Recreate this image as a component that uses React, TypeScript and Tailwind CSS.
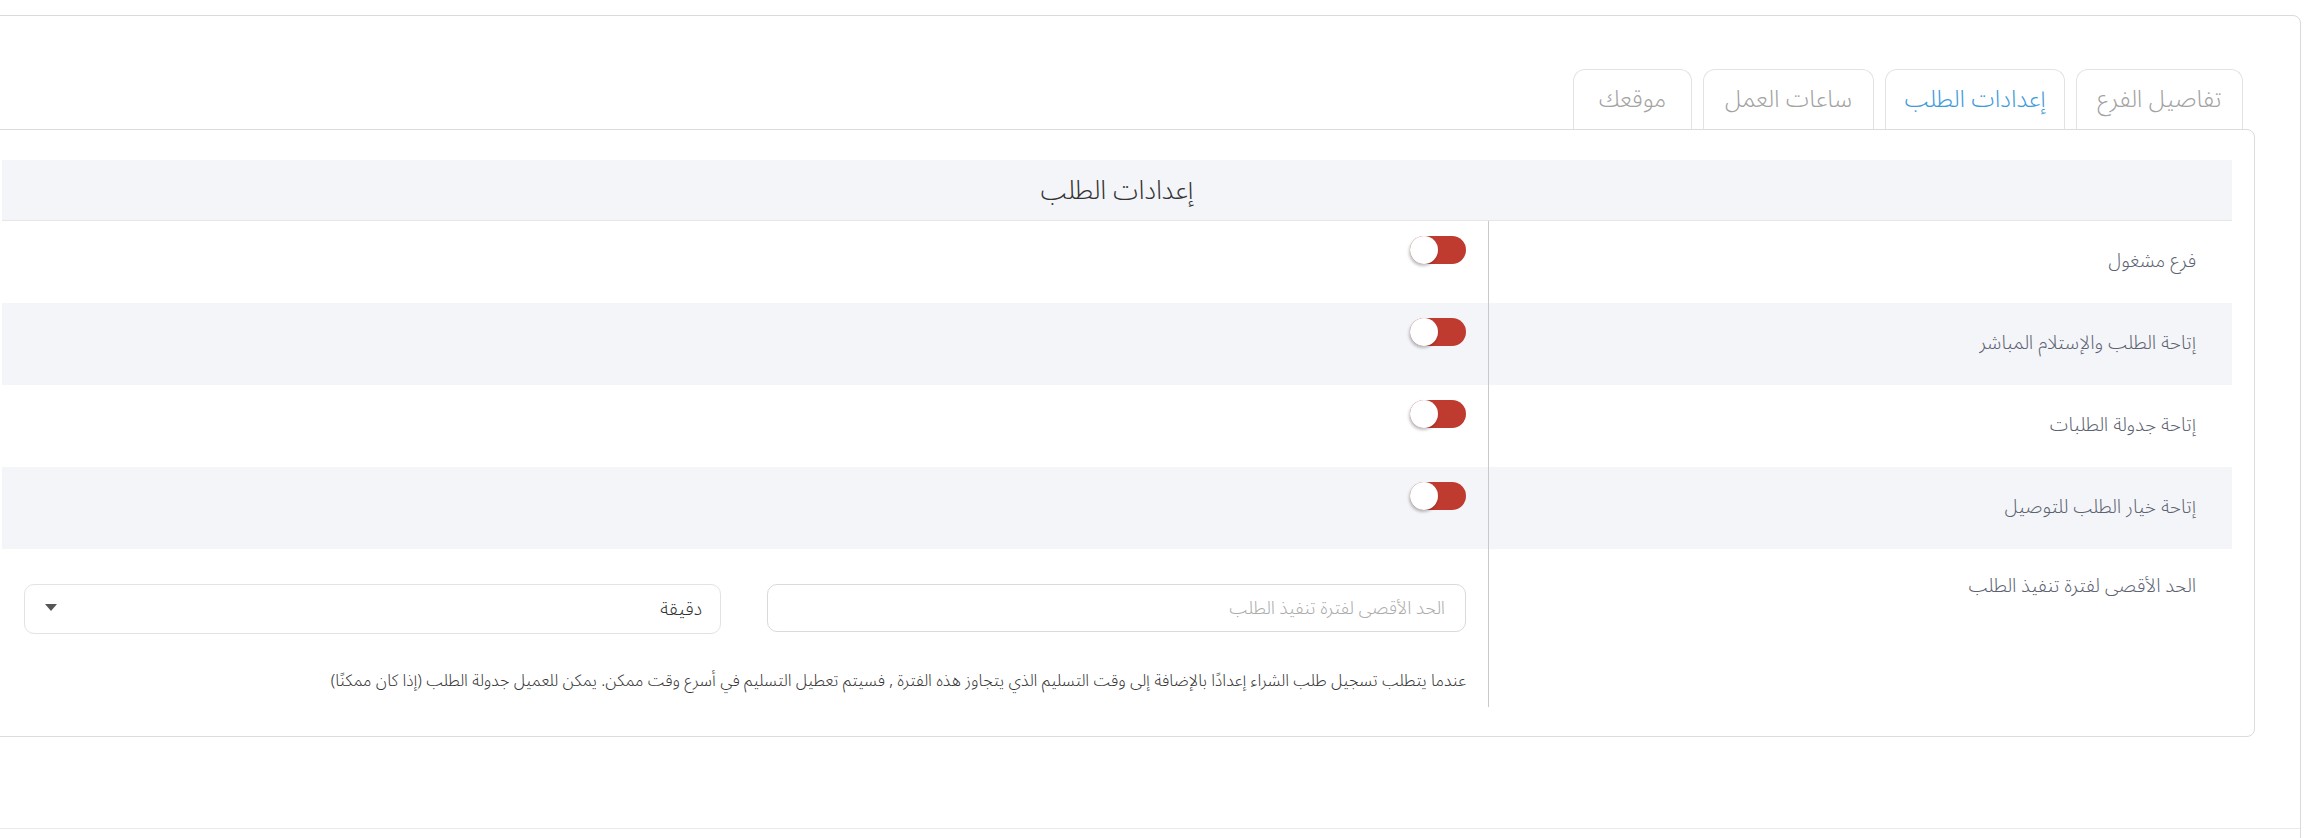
import React from 'react';

const font = { fontFamily: '"Noto Sans Arabic", "DejaVu Sans", sans-serif' };

type Tab = { label: string; width: string; active?: boolean };

const tabs: Tab[] = [
  { label: 'تفاصيل الفرع', width: 'w-[167px]' },
  { label: 'إعدادات الطلب', width: 'w-[180px]', active: true },
  { label: 'ساعات العمل', width: 'w-[171px]' },
  { label: 'موقعك', width: 'w-[119px]' },
];

const toggleRows = [
  'فرع مشغول',
  'إتاحة الطلب والإستلام المباشر',
  'إتاحة جدولة الطلبات',
  'إتاحة خيار الطلب للتوصيل',
];

const Toggle: React.FC = () => (
  <span className="relative inline-block w-[56px] h-[28px] rounded-full bg-[#bf3a2f]">
    <span className="absolute left-0 top-0 w-[28px] h-[28px] rounded-full bg-white shadow-[-1px_2px_3px_rgba(0,0,0,0.25)]" />
  </span>
);

const SettingRow: React.FC<{ label: string; gray: boolean; children: React.ReactNode }> = ({
  label,
  gray,
  children,
}) => (
  <div className={`flex ${gray ? 'bg-[#f4f5f9]' : 'bg-white'}`}>
    <div className="w-[744px] shrink-0 border-l border-[#c9c9cc] pr-[36px] pt-[27px] pb-[29px] text-[19px] leading-[26px] text-[#5b6270]">
      {label}
    </div>
    <div className="flex-1 px-[22px] pt-[15px]">{children}</div>
  </div>
);

export default function App() {
  return (
    <div dir="rtl" className="w-[2316px] h-[838px] overflow-hidden bg-white font-light" style={font}>
      <div className="w-[2368px] h-[900px] mt-[15px] mr-[15px] border border-[#dadada] rounded-[8px] pt-[53px] px-[45px]">
        {/* tabs */}
        <div className="flex gap-[11px] mr-[12px]">
          {tabs.map((t) => (
            <div
              key={t.label}
              className={`${t.width} h-[60px] flex items-center justify-center border border-b-0 border-[#e3e3e6] rounded-t-[12px] text-[24px] ${
                t.active ? 'text-[#3d9bdc]' : 'text-[#a2a2a2]'
              }`}
            >
              {t.label}
            </div>
          ))}
        </div>

        {/* panel */}
        <div className="border border-[#dcdcdc] rounded-[8px] px-[22px] pt-[30px] pb-[29px]">
          <div className="h-[61px] flex items-center justify-center bg-[#f4f5f9] border-b border-[#e6e6ea] text-[26px] text-[#333]">
            إعدادات الطلب
          </div>

          {toggleRows.map((label, i) => (
            <SettingRow key={label} label={label} gray={i % 2 === 1}>
              <Toggle />
            </SettingRow>
          ))}

          <div className="flex bg-white">
            <div className="w-[744px] shrink-0 border-l border-[#c9c9cc] pr-[36px] pt-[24px] text-[19px] leading-[26px] text-[#5b6270]">
              الحد الأقصى لفترة تنفيذ الطلب
            </div>
            <div className="flex-1 px-[22px] pt-[35px] pb-[14px]">
              <div className="flex gap-[46px]">
                <input
                  className="flex-1 h-[48px] border border-[#dadada] rounded-[10px] px-[20px] text-[18px] font-light text-[#333] placeholder:text-[#ababab] outline-none"
                  placeholder="الحد الأقصى لفترة تنفيذ الطلب"
                  style={font}
                />
                <div className="flex-1 h-[50px] border border-[#e2e2e8] rounded-[10px] pr-[18px] pl-[20px] flex items-center justify-between text-[19px] text-[#333]">
                  <span>دقيقة</span>
                  <svg width="12" height="8" viewBox="0 0 12 8" className="-mt-[2px]">
                    <polygon points="0,0 12,0 6,7" fill="#555" />
                  </svg>
                </div>
              </div>
              <p className="mt-[35px] text-[16.5px] leading-[24px] text-[#333]">
                عندما يتطلب تسجيل طلب الشراء إعدادًا بالإضافة إلى وقت التسليم الذي يتجاوز هذه الفترة , فسيتم تعطيل التسليم في أسرع وقت ممكن. يمكن للعميل جدولة الطلب (إذا كان ممكنًا)
              </p>
            </div>
          </div>
        </div>

        <div className="mt-[91px] -mx-[45px] border-t border-[#e9e9ee]" />
      </div>
    </div>
  );
}
